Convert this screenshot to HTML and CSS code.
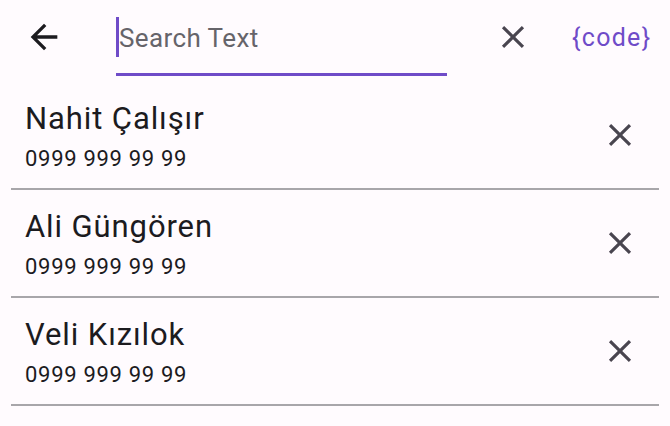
FILE: index.html
```html
<!DOCTYPE html>
<html>
<head>
<meta charset="utf-8">
<link rel="stylesheet" href="styles.css">
</head>
<body>
<header class="appbar">
  <button class="icon-btn back" aria-label="Back">
    <svg viewBox="0 0 24 24" width="40" height="40"><path d="M20 11H7.83l5.59-5.59L12 4l-8 8 8 8 1.41-1.41L7.83 13H20v-2z" fill="#1c1b1f"/></svg>
  </button>
  <div class="field">
    <span class="caret"></span><span class="hint">Search Text</span>
  </div>
  <button class="icon-btn clear" aria-label="Clear">
    <svg viewBox="0 0 24 24" width="38" height="38"><path d="M19 6.41L17.59 5 12 10.59 6.41 5 5 6.41 10.59 12 5 17.59 6.41 19 12 13.41 17.59 19 19 17.59 13.41 12z" fill="#49454f"/></svg>
  </button>
  <span class="code">{code}</span>
</header>
<ul class="list">
  <li class="item">
    <div class="texts"><div class="name">Nahit Çalışır</div><div class="phone">0999 999 99 99</div></div>
    <svg class="del" viewBox="0 0 24 24" width="38" height="38"><path d="M19 6.41L17.59 5 12 10.59 6.41 5 5 6.41 10.59 12 5 17.59 6.41 19 12 13.41 17.59 19 19 17.59 13.41 12z" fill="#49454f"/></svg>
  </li>
  <li class="item">
    <div class="texts"><div class="name">Ali Güngören</div><div class="phone">0999 999 99 99</div></div>
    <svg class="del" viewBox="0 0 24 24" width="38" height="38"><path d="M19 6.41L17.59 5 12 10.59 6.41 5 5 6.41 10.59 12 5 17.59 6.41 19 12 13.41 17.59 19 19 17.59 13.41 12z" fill="#49454f"/></svg>
  </li>
  <li class="item">
    <div class="texts"><div class="name">Veli Kızılok</div><div class="phone">0999 999 99 99</div></div>
    <svg class="del" viewBox="0 0 24 24" width="38" height="38"><path d="M19 6.41L17.59 5 12 10.59 6.41 5 5 6.41 10.59 12 5 17.59 6.41 19 12 13.41 17.59 19 19 17.59 13.41 12z" fill="#49454f"/></svg>
  </li>
</ul>
</body>
</html>
```
FILE: styles.css
```css
html, body {
  margin: 0;
  padding: 0;
  background: #fffbfe;
  font-family: Roboto, "Noto Sans", sans-serif;
  color: #1c1b1f;
  width: 670px;
  height: 426px;
  overflow: hidden;
}
.appbar {
  display: flex;
  align-items: flex-start;
  height: 82px;
}
.icon-btn {
  background: none;
  border: 0;
  padding: 0;
  display: flex;
  align-items: center;
  justify-content: center;
  height: 74px;
}
.back {
  width: 40px;
  margin-left: 24px;
}
.field {
  margin-left: 52px;
  width: 331px;
  height: 76px;
  box-sizing: border-box;
  border-bottom: 3px solid #6f4bc8;
  display: flex;
  align-items: center;
}
.caret {
  display: inline-block;
  width: 3px;
  height: 40px;
  background: #6f4bc8;
  margin-top: 1px;
}
.hint {
  font-size: 26px;
  letter-spacing: 0.4px;
  color: #66646a;
  line-height: 1;
  padding-top: 3px;
}
.clear {
  width: 38px;
  margin-left: 47px;
}
.code {
  margin-left: 40px;
  height: 74px;
  display: flex;
  align-items: center;
  font-size: 25px;
  letter-spacing: 1.3px;
  color: #6f4bc8;
}
.list {
  list-style: none;
  margin: 0;
  padding: 0;
}
.item {
  margin: 0 11px;
  height: 106px;
  border-bottom: 2px solid #a8a6aa;
  display: flex;
  align-items: center;
  padding-left: 14px;
  padding-right: 20px;
}
.texts {
  flex: 1;
  display: flex;
  flex-direction: column;
  padding-top: 4px;
}
.name {
  font-size: 31px;
  letter-spacing: 0.9px;
  line-height: 38px;
}
.phone {
  font-size: 22px;
  letter-spacing: 0.7px;
  line-height: 30px;
  margin-top: 6px;
}
.del {
  flex: none;
}
```
